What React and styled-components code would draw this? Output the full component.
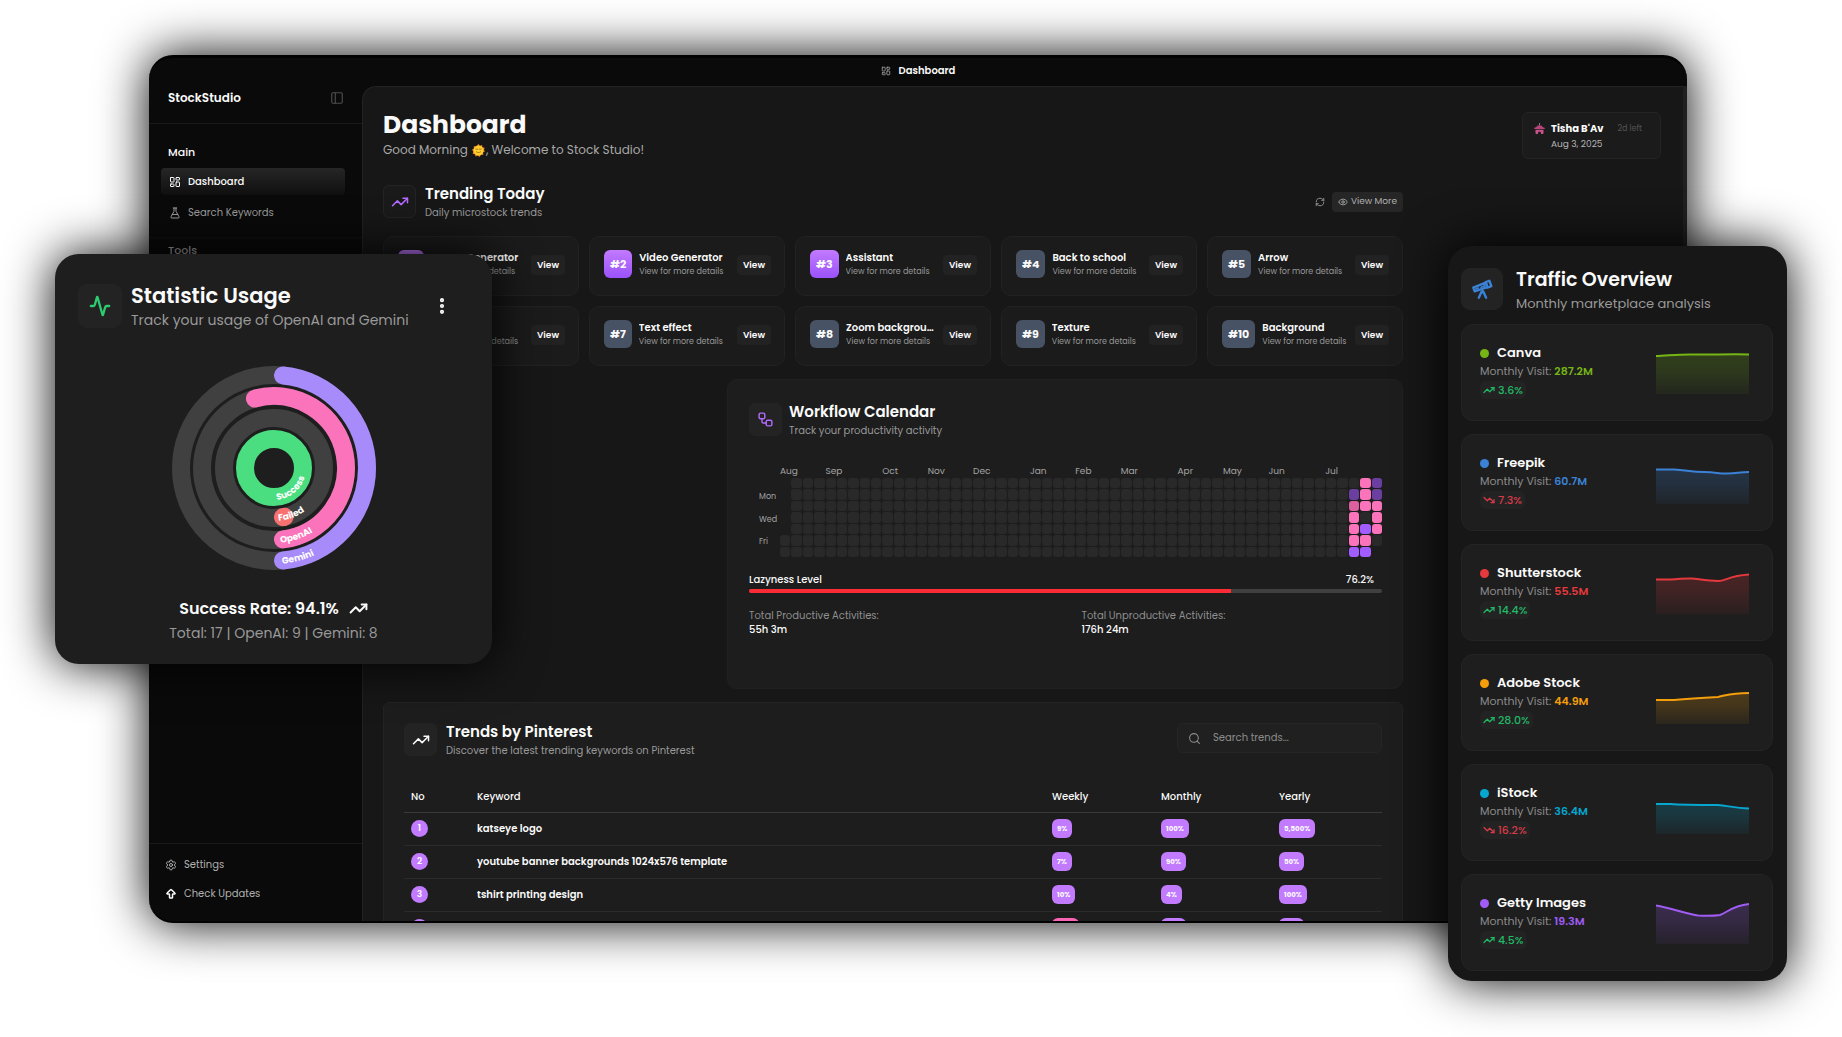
import styled, { createGlobalStyle, css } from "styled-components";
import {
  Activity,
  ArrowBigUp,
  EllipsisVertical,
  Eye,
  FlaskConical,
  LayoutDashboard,
  PanelLeft,
  RefreshCw,
  Search,
  Settings,
  TrendingDown,
  TrendingUp,
  Workflow,
} from "lucide-react";

const GlobalStyle = createGlobalStyle`
  *, *::before, *::after {
    box-sizing: border-box;
    margin: 0;
    padding: 0;
  }

  body {
    background: #fff;
    color: #fafafa;
    font-family: Poppins, Inter, "Noto Sans", sans-serif;
    font-size: 12px;
  }

  button, input {
    font: inherit;
    color: inherit;
    border: none;
    background: none;
  }

  a {
    color: inherit;
    text-decoration: none;
  }

  ul {
    list-style: none;
  }

  svg {
    display: block;
    flex-shrink: 0;
  }
`;

const MONTHS = [
  ["Aug", 0],
  ["Sep", 4],
  ["Oct", 9],
  ["Nov", 13],
  ["Dec", 17],
  ["Jan", 22],
  ["Feb", 26],
  ["Mar", 30],
  ["Apr", 35],
  ["May", 39],
  ["Jun", 43],
  ["Jul", 48],
];

const WEEKDAYS = ["", "Mon", "", "Wed", "", "Fri", ""];

// one letter per day, Sunday first: e = empty, d = dim, r = rose, p = pink, v = violet, - = outside the year
const LAST_WEEKS = ["edrpppv", "pppevpv", "ddpppe-"];

const LEVELS = {
  e: "#292929",
  d: "#6a3fa0",
  r: "#dc5fa0",
  p: "#fb74bb",
  v: "#a15dff",
  "-": "transparent",
};

const WEEKS = [
  "-----ee",
  ...Array.from({ length: 49 }, () => "eeeeeee"),
  ...LAST_WEEKS,
];

const TRENDS = [
  "Image Generator",
  "Video Generator",
  "Assistant",
  "Back to school",
  "Arrow",
  "Adventure",
  "Text effect",
  "Zoom background",
  "Texture",
  "Background",
];

const KEYWORDS = [
  { keyword: "katseye logo", weekly: "9%", monthly: "100%", yearly: "5,500%" },
  {
    keyword: "youtube banner backgrounds 1024x576 template",
    weekly: "7%",
    monthly: "90%",
    yearly: "50%",
  },
  {
    keyword: "tshirt printing design",
    weekly: "10%",
    monthly: "4%",
    yearly: "100%",
  },
  {
    keyword: "back to school",
    weekly: "-10%",
    monthly: "40%",
    yearly: "20%",
    falling: true,
  },
];

const MARKETS = [
  {
    name: "Canva",
    visits: "287.2M",
    change: "3.6%",
    up: true,
    color: "#76b516",
    line: "M0 6C10 6 22 4 38 4.500S70 4 93 4.500",
  },
  {
    name: "Freepik",
    visits: "60.7M",
    change: "7.3%",
    up: false,
    color: "#3b82d6",
    line: "M0 9.500H18C30 10 35 12 48 12S62 14 72 13.500S84 12 93 12",
  },
  {
    name: "Shutterstock",
    visits: "55.5M",
    change: "14.4%",
    up: true,
    color: "#e5393d",
    line: "M0 9.500H15C25 9 30 8 36 8.500S52 11 62 11C70 11 72 6 93 4.500",
  },
  {
    name: "Adobe Stock",
    visits: "44.9M",
    change: "28.0%",
    up: true,
    color: "#f59e0b",
    line: "M0 20H18C30 19 45 18 62 17C72 15 74 13 93 13",
  },
  {
    name: "iStock",
    visits: "36.4M",
    change: "16.2%",
    up: false,
    color: "#06a6cf",
    line: "M0 14H15C25 15 40 15 62 15C72 16 80 18 93 18.500",
  },
  {
    name: "Getty Images",
    visits: "19.3M",
    change: "4.5%",
    up: true,
    color: "#a05cf5",
    line: "M0 5.500C14 8 32 14 42 15.500C50 16 58 16 64 15C72 12 76 6 93 4",
  },
];

/* ---------- shell ---------- */

const Stage = styled.div`
  position: relative;
  min-height: 100vh;
  padding: 55px 155px 114px 149px;
  overflow: hidden;
`;

const Window = styled.div`
  display: flex;
  flex-direction: column;
  height: calc(100vh - 169px);
  min-height: 680px;
  overflow: hidden;
  background: #0a0a0a;
  border-top: 3px solid #020202;
  border-bottom: 2px solid #020202;
  border-radius: 24px;
  box-shadow: 0 0 50px #000;
`;

const TitleBar = styled.div`
  display: flex;
  align-items: center;
  justify-content: center;
  gap: 8px;
  flex: 0 0 28px;
  padding-bottom: 2px;
  font-size: 10px;
  font-weight: 600;

  svg {
    color: #a3a3a3;
  }
`;

const Body = styled.div`
  display: flex;
  flex: 1;
  min-height: 0;
`;

/* ---------- sidebar ---------- */

const Sidebar = styled.aside`
  display: flex;
  flex-direction: column;
  flex: 0 0 213px;
`;

const SidebarHeader = styled.div`
  display: flex;
  align-items: center;
  justify-content: space-between;
  padding: 4px 18px 17px 19px;
  border-bottom: 1px solid #191919;
  font-size: 12px;
  line-height: 16px;
  font-weight: 600;
`;

const IconButton = styled.button`
  display: grid;
  place-items: center;
  color: ${({ $color }) => $color || "#a3a3a3"};
`;

const NavGroup = styled.nav`
  padding: 19px 17px 7px 12px;
  border-bottom: 1px solid #121212;
`;

const NavTitle = styled.h2`
  padding: 0 7px 7px;
  font-size: 11px;
  line-height: 18px;
  font-weight: 500;
`;

const ToolsGroup = styled(NavGroup)`
  padding-top: 3px;
  border-bottom: none;

  ${NavTitle} {
    color: #a3a3a3;
  }
`;

const NavLink = styled.a`
  display: flex;
  align-items: center;
  gap: 7px;
  height: 27px;
  margin-bottom: 4px;
  padding: 0 8px;
  border-radius: 4px;
  font-size: 10px;
  color: #9c9c9c;

  ${({ $active }) =>
    $active &&
    css`
      background: linear-gradient(#262626, #0f0f0f);
      color: #fafafa;
      font-weight: 500;
    `}
`;

const SidebarFooter = styled.nav`
  margin-top: auto;
  padding: 6px 16px 13px 8px;
  border-top: 1px solid #191919;

  ${NavLink} {
    height: 29px;
    margin: 0;
    color: #b0b0b0;
  }
`;

/* ---------- page ---------- */

const Main = styled.main`
  flex: 1;
  min-width: 0;
  overflow: hidden;
  padding: 25px 22px 0 20px;
  background: #171717;
  border: 1px solid #222;
  border-right: 4px solid #202020;
  border-bottom: none;
  border-top-left-radius: 14px;
`;

const PageHeader = styled.header`
  display: flex;
  justify-content: space-between;
  align-items: flex-start;
`;

const PageTitle = styled.h1`
  font-size: 25px;
  line-height: 26px;
  font-weight: 700;
`;

const Greeting = styled.p`
  display: flex;
  align-items: center;
  margin-top: 4px;
  font-size: 12px;
  line-height: 16px;
  color: #a8a8a8;

  svg {
    margin: 0 1px 0 4px;
  }
`;

const Holiday = styled.section`
  display: grid;
  grid-template-columns: 10px auto auto;
  column-gap: 7px;
  row-gap: 1px;
  align-items: center;
  min-width: 139px;
  padding: 8px 18px 6px 11px;
  background: #1b1b1b;
  border: 1px solid #242424;
  border-radius: 6px;
  line-height: 15px;
`;

const HolidayName = styled.h3`
  font-size: 10px;
  font-weight: 700;
`;

const HolidayLeft = styled.span`
  justify-self: end;
  font-size: 8px;
  color: #555;
`;

const HolidayDate = styled.p`
  grid-column: 2 / -1;
  font-size: 9px;
  color: #b5b5b5;
`;

// the second column stays free beside the content
const Columns = styled.div`
  display: grid;
  grid-template-columns: minmax(0, 1fr) 246px;
  column-gap: 12px;
  margin-top: 26px;
`;

const Content = styled.div`
  display: grid;
  grid-template-columns: repeat(3, minmax(0, 1fr));
  gap: 13px 12px;
`;

const Heading = styled.div`
  display: flex;
  align-items: flex-start;
  gap: ${({ $gap }) => $gap || 9}px;
`;

const IconBox = styled.div`
  display: grid;
  place-items: center;
  flex-shrink: 0;
  width: ${({ $size }) => $size || 33}px;
  height: ${({ $size }) => $size || 33}px;
  background: ${({ $plain }) => ($plain ? "#1a1a1a" : "#232323")};
  border: 1px solid #242424;
  border-radius: ${({ $size }) => ($size ? 9 : 6)}px;
  color: ${({ $color }) => $color || "#fafafa"};
`;

const Title = styled.h2`
  font-size: 15px;
  line-height: 18px;
  font-weight: 600;
`;

const Subtitle = styled.p`
  font-size: 10px;
  line-height: 19px;
  color: #999;
`;

const Section = styled.section`
  grid-column: 1 / -1;
`;

const SectionTop = styled.div`
  display: flex;
  align-items: flex-start;
  justify-content: space-between;
`;

const Actions = styled.div`
  display: flex;
  align-items: center;
  gap: 7px;
  height: 33px;
`;

const ViewMore = styled.button`
  display: flex;
  align-items: center;
  gap: 3px;
  height: 20px;
  padding: 0 6px;
  background: #262626;
  border-radius: 4px;
  font-size: 9px;
  color: #b0b0b0;
`;

const TrendGrid = styled.ul`
  display: grid;
  grid-template-columns: repeat(5, minmax(0, 1fr));
  gap: 10px;
  margin-top: 14px;
`;

const TrendCard = styled.li`
  display: flex;
  align-items: flex-start;
  gap: 7px;
  height: 60px;
  padding: 13px 13px 0 14px;
  background: #1b1b1b;
  border: 1px solid #222;
  border-radius: 10px;
`;

const Rank = styled.div`
  flex-shrink: 0;
  padding: 0 6px;
  background: ${({ $top }) =>
    $top ? "linear-gradient(#c27aff, #9a52fb)" : "#475264"};
  border-radius: 6px;
  font-size: 11px;
  line-height: 28px;
  font-weight: 700;
`;

const TrendText = styled.div`
  flex: 1;
  min-width: 0;
  padding-top: 1px;

  h3,
  p {
    overflow: hidden;
    text-overflow: ellipsis;
    white-space: nowrap;
  }

  h3 {
    font-size: 10px;
    line-height: 14px;
    font-weight: 600;
  }

  p {
    font-size: 8px;
    line-height: 13px;
    color: #999;
  }
`;

const ViewButton = styled.button`
  flex-shrink: 0;
  height: 20px;
  margin-top: 5px;
  padding: 0 6px;
  background: #222;
  border-radius: 4px;
  font-size: 9px;
  font-weight: 600;
`;

/* ---------- workflow calendar ---------- */

const WorkflowCard = styled.section`
  grid-column: 2 / -1;
  min-height: 310px;
  padding: 23px 20px 23px 21px;
  background: #1d1d1d;
  border: 1px solid #212121;
  border-radius: 10px;
`;

const CalendarBlock = styled.div`
  display: grid;
  grid-template-columns: 21px minmax(0, 1fr);
  margin: 25px 0 0 10px;
  font-size: 9px;
  line-height: 12px;
  color: #a3a3a3;
`;

const MonthRow = styled.div`
  grid-column: 2;
  display: grid;
  grid-template-columns: repeat(53, minmax(0, 1fr));
  height: 13px;
  white-space: nowrap;
`;

const Month = styled.span`
  grid-column: ${({ $week }) => $week + 1} / span 4;
`;

const DayLabels = styled.div`
  display: grid;
  grid-template-rows: repeat(7, minmax(0, 1fr));
  height: 79px;
  font-size: 8px;
  line-height: 16px;
`;

const Weeks = styled.div`
  display: grid;
  grid-auto-flow: column;
  grid-template-rows: repeat(7, minmax(0, 1fr));
  grid-auto-columns: minmax(0, 1fr);
  gap: 1px;
`;

const Day = styled.span`
  background: ${({ $level }) => LEVELS[$level]};
  border-radius: 3px;
`;

const LevelRow = styled.div`
  display: flex;
  justify-content: space-between;
  margin-top: 16px;
  padding-right: 8px;
  font-size: 10px;
  line-height: 14px;
  font-weight: 500;
`;

const Track = styled.div`
  height: 4px;
  margin-top: 2px;
  background: #404040;
  border-radius: 2px;
`;

const TrackFill = styled.div`
  height: 100%;
  background: #fb2c36;
  border-radius: 2px 0 0 2px;
`;

const Totals = styled.dl`
  display: grid;
  grid-template-columns: 1fr 1fr;
  column-gap: 32px;
  margin-top: 16px;
  font-size: 10px;
  line-height: 14px;

  dt {
    color: #8f8f8f;
  }

  dd {
    font-weight: 500;
  }
`;

/* ---------- pinterest table ---------- */

const PinterestCard = styled.section`
  grid-column: 1 / -1;
  padding: 20px;
  background: #1d1d1d;
  border: 1px solid #232323;
  border-radius: 6px;
`;

const SearchBox = styled.label`
  display: flex;
  align-items: center;
  gap: 12px;
  width: 205px;
  height: 30px;
  padding: 0 10px;
  background: #202020;
  border: 1px solid #252525;
  border-radius: 6px;
  color: #8c8c8c;

  input {
    flex: 1;
    min-width: 0;
    font-size: 10px;
    outline: none;
  }

  input::placeholder {
    color: #8c8c8c;
  }
`;

const Table = styled.table`
  width: 100%;
  margin-top: 23px;
  border-collapse: collapse;
  table-layout: fixed;
  text-align: left;

  th {
    height: 29px;
    padding: 0 7px;
    border-bottom: 1px solid #3a3a3a;
    font-size: 10px;
    font-weight: 500;
  }

  td {
    height: 33px;
    padding: 0 7px;
    border-bottom: 1px solid #2b2b2b;
    font-size: 10px;
    font-weight: 600;
  }
`;

const Number = styled.span`
  display: grid;
  place-items: center;
  width: 17px;
  height: 17px;
  background: #c27aff;
  border-radius: 50%;
  font-size: 9px;
`;

const Pill = styled.span`
  display: inline-block;
  padding: 0 5px;
  background: ${({ $falling }) => ($falling ? "#fb64b6" : "#c27aff")};
  border-radius: 6px;
  font-size: 7px;
  line-height: 19px;
  font-weight: 700;
  vertical-align: middle;
`;

/* ---------- floating cards ---------- */

const FloatingCard = styled.section`
  position: absolute;
  border-radius: 24px;
  box-shadow: 0 0 50px #000;

  ${Title} {
    font-size: ${({ $titleSize }) => $titleSize}px;
    line-height: 24px;
  }

  ${Subtitle} {
    font-size: ${({ $textSize }) => $textSize}px;
    line-height: 24px;
  }
`;

const StatisticCard = styled(FloatingCard)`
  top: 254px;
  left: 55px;
  width: 437px;
  padding: 30px 40px 19px 23px;
  background: #1e1e1e;

  ${IconButton} {
    height: 44px;
  }
`;

const ChartArea = styled.div`
  display: flex;
  justify-content: center;
  margin-top: 33px;
  padding-left: 17px;
`;

const ChartFooter = styled.div`
  margin-top: 25px;
  padding-left: 17px;
  text-align: center;
`;

const SuccessRate = styled.p`
  display: flex;
  justify-content: center;
  align-items: center;
  gap: 10px;
  font-size: 16px;
  line-height: 25px;
  font-weight: 600;
`;

const TrafficCard = styled(FloatingCard)`
  top: 246px;
  right: 55px;
  width: 339px;
  padding: 22px 14px 10px 13px;
  background: #171717;
`;

const MarketList = styled.ul`
  display: grid;
  gap: 13px;
  margin-top: 8px;
`;

const Market = styled.li`
  display: flex;
  justify-content: space-between;
  align-items: flex-start;
  height: 97px;
  padding: 19px 23px 0 18px;
  background: #1e1e1e;
  border: 1px solid #242424;
  border-radius: 12px;
`;

const MarketName = styled.h3`
  display: flex;
  align-items: center;
  gap: 8px;
  font-size: 13px;
  line-height: 18px;
  font-weight: 600;

  &::before {
    content: "";
    width: 9px;
    height: 9px;
    background: ${({ $color }) => $color};
    border-radius: 50%;
  }
`;

const Visits = styled.p`
  font-size: 11px;
  line-height: 18px;
  color: #8c8c8c;

  strong {
    color: ${({ $color }) => $color};
    font-weight: 600;
  }
`;

const Change = styled.span`
  display: inline-flex;
  align-items: center;
  gap: 3px;
  height: 18px;
  margin-top: 1px;
  padding: 0 3px;
  background: #232323;
  border-radius: 6px;
  font-size: 11px;
  font-weight: 500;
  color: ${({ $up }) => ($up ? "#22b866" : "#d63b48")};
`;

const Sparkline = styled.svg`
  margin-top: 6px;
`;

function SunIcon() {
  return (
    <svg width="13" height="13" viewBox="0 0 24 24">
      <path
        fill="#f28c1c"
        d="m12 0 2.600 3.400L18.600 2l.6 4.200 4.200.8-1.500 4L24 13.600l-3.500 2.300.3 4.300-4.200-.2L14 24l-3.200-2.700L6.800 23l-1.400-4-4.200-1 1.200-4L0 10.600l3.500-2.400L3.200 4l4.300.2z"
      />
      <circle cx="12" cy="12" r="9" fill="#ffd02f" />
      <path
        fill="none"
        stroke="#9a6410"
        strokeWidth="1.500"
        strokeLinecap="round"
        d="M7 9.500h3.500M13.500 9.500H17M8 14.500c2.500 2 5.500 2 8 0"
      />
    </svg>
  );
}

function TempleIcon() {
  return (
    <svg width="11" height="11" viewBox="0 0 22 22">
      <path stroke="#a3a3a3" strokeWidth="1.500" d="M11 0v5" />
      <path fill="#b8447c" d="M0 10c4-1 6-3 7-5h8c1 2 3 4 7 5l-1 2H1z" />
      <path
        fill="#c7528a"
        d="M3 13.500h16V20c0 1-1 2-2 2h-3v-2a3 3 0 0 0-6 0v2H5c-1 0-2-1-2-2z"
      />
    </svg>
  );
}

function TelescopeIcon() {
  return (
    <svg
      width="22"
      height="22"
      viewBox="0 0 24 24"
      fill="none"
      stroke="#3b82d6"
      strokeWidth="2.600"
      strokeLinecap="round"
      strokeLinejoin="round"
    >
      <path d="m2.500 10.500 1.500 4 14-4.500-2-5z" />
      <path d="m16 4.500 4-1.500 2.200 6L18 10.500z" />
      <path d="m5 12 3-1M11 10l4-1.400" strokeWidth="1.800" />
      <path d="m11.500 15-3 6.500M13.500 15l3 6.500M12.500 13.500v2" />
    </svg>
  );
}

// Arcs start straight down and run counter-clockwise. The round caps stay inside the sweep.
const RING_WIDTH = 18;
const RINGS = [
  { label: "Gemini", radius: 93, sweep: 180, color: "#a78bfa" },
  { label: "OpenAI", radius: 72, sweep: 202.5, color: "#fb74bb" },
  { label: "Failed", radius: 50, sweep: 22.5, color: "#f87171" },
  { label: "Success", radius: 29, sweep: 360, color: "#4ade80" },
];

function pointAt(radius, degrees) {
  const angle = (degrees * Math.PI) / 180;
  return `${radius * Math.sin(angle)} ${radius * Math.cos(angle)}`;
}

function arcPath(radius, from, to) {
  const large = to - from > 180 ? 1 : 0;
  return `M${pointAt(radius, from)}A${radius} ${radius} 0 ${large} 0 ${pointAt(radius, to)}`;
}

function RadialChart() {
  return (
    <svg width="206" height="206" viewBox="-103 -103 206 206">
      {RINGS.map(({ label, radius, sweep, color }) => {
        const cap = (RING_WIDTH / 2 / radius) * (180 / Math.PI);

        return (
          <g key={label} fill="none" strokeWidth={RING_WIDTH}>
            <circle r={radius} stroke={sweep === 360 ? color : "#404040"} />
            {sweep < 360 && (
              <path
                d={arcPath(radius, cap, sweep - cap)}
                stroke={color}
                strokeLinecap="round"
              />
            )}
            <path
              id={`ring-${label}`}
              d={arcPath(radius + 3, 5, 170)}
              stroke="none"
            />
          </g>
        );
      })}
      {RINGS.map(({ label }) => (
        <text key={label} fill="#fff" fontSize="9" fontWeight="700">
          <textPath href={`#ring-${label}`}>{label}</textPath>
        </text>
      ))}
    </svg>
  );
}

function StatisticUsage() {
  return (
    <StatisticCard $titleSize={21} $textSize={14}>
      <SectionTop>
        <Heading>
          <IconBox $size={44} $color="#2ecc71">
            <Activity size={22} strokeWidth={2.5} />
          </IconBox>
          <div>
            <Title>Statistic Usage</Title>
            <Subtitle>Track your usage of OpenAI and Gemini</Subtitle>
          </div>
        </Heading>
        <IconButton $color="#fafafa" aria-label="More options">
          <EllipsisVertical size={20} strokeWidth={3} />
        </IconButton>
      </SectionTop>
      <ChartArea>
        <RadialChart />
      </ChartArea>
      <ChartFooter>
        <SuccessRate>
          Success Rate: 94.1% <TrendingUp size={19} strokeWidth={2.5} />
        </SuccessRate>
        <Subtitle>Total: 17 | OpenAI: 9 | Gemini: 8</Subtitle>
      </ChartFooter>
    </StatisticCard>
  );
}

function MarketRow({ market }) {
  const { name, visits, change, up, color, line } = market;
  const gradientId = `fill-${name.replace(" ", "-")}`;
  const Trend = up ? TrendingUp : TrendingDown;

  return (
    <Market>
      <div>
        <MarketName $color={color}>{name}</MarketName>
        <Visits $color={color}>
          Monthly Visit: <strong>{visits}</strong>
        </Visits>
        <Change $up={up}>
          <Trend size={12} strokeWidth={2.5} /> {change}
        </Change>
      </div>
      <Sparkline width="93" height="44" viewBox="0 0 93 44">
        <defs>
          <linearGradient id={gradientId} x1="0" y1="0" x2="0" y2="1">
            <stop offset="0" stopColor={color} stopOpacity="0.22" />
            <stop offset="0.4" stopColor={color} stopOpacity="0.18" />
            <stop offset="1" stopColor={color} stopOpacity="0.06" />
          </linearGradient>
        </defs>
        <path d={`${line}V44H0Z`} fill={`url(#${gradientId})`} />
        <path d={line} fill="none" stroke={color} strokeWidth="2" />
      </Sparkline>
    </Market>
  );
}

function TrafficOverview() {
  return (
    <TrafficCard $titleSize={19} $textSize={13}>
      <Heading $gap={13}>
        <IconBox $size={42}>
          <TelescopeIcon />
        </IconBox>
        <div>
          <Title>Traffic Overview</Title>
          <Subtitle>Monthly marketplace analysis</Subtitle>
        </div>
      </Heading>
      <MarketList>
        {MARKETS.map((market) => (
          <MarketRow key={market.name} market={market} />
        ))}
      </MarketList>
    </TrafficCard>
  );
}

function TrendingToday() {
  return (
    <Section>
      <SectionTop>
        <Heading>
          <IconBox $plain $color="#b26bff">
            <TrendingUp size={18} />
          </IconBox>
          <div>
            <Title>Trending Today</Title>
            <Subtitle>Daily microstock trends</Subtitle>
          </div>
        </Heading>
        <Actions>
          <IconButton aria-label="Refresh">
            <RefreshCw size={10} />
          </IconButton>
          <ViewMore>
            <Eye size={10} /> View More
          </ViewMore>
        </Actions>
      </SectionTop>
      <TrendGrid>
        {TRENDS.map((trend, i) => (
          <TrendCard key={trend}>
            <Rank $top={i < 3}>#{i + 1}</Rank>
            <TrendText>
              <h3>{trend}</h3>
              <p>View for more details</p>
            </TrendText>
            <ViewButton>View</ViewButton>
          </TrendCard>
        ))}
      </TrendGrid>
    </Section>
  );
}

function WorkflowCalendar() {
  const lazyness = 76.2;

  return (
    <WorkflowCard>
      <Heading $gap={7}>
        <IconBox $color="#b26bff">
          <Workflow size={17} />
        </IconBox>
        <div>
          <Title>Workflow Calendar</Title>
          <Subtitle>Track your productivity activity</Subtitle>
        </div>
      </Heading>
      <CalendarBlock>
        <MonthRow>
          {MONTHS.map(([month, week]) => (
            <Month key={month} $week={week}>
              {month}
            </Month>
          ))}
        </MonthRow>
        <DayLabels>
          {WEEKDAYS.map((day, i) => (
            <span key={i}>{day}</span>
          ))}
        </DayLabels>
        <Weeks>
          {WEEKS.map((week, i) =>
            [...week].map((level, j) => <Day key={`${i}-${j}`} $level={level} />)
          )}
        </Weeks>
      </CalendarBlock>
      <LevelRow>
        <span>Lazyness Level</span>
        <span>{lazyness}%</span>
      </LevelRow>
      <Track>
        <TrackFill style={{ width: `${lazyness}%` }} />
      </Track>
      <Totals>
        <div>
          <dt>Total Productive Activities:</dt>
          <dd>55h 3m</dd>
        </div>
        <div>
          <dt>Total Unproductive Activities:</dt>
          <dd>176h 24m</dd>
        </div>
      </Totals>
    </WorkflowCard>
  );
}

function PinterestTrends() {
  return (
    <PinterestCard>
      <SectionTop>
        <Heading>
          <IconBox>
            <TrendingUp size={18} />
          </IconBox>
          <div>
            <Title>Trends by Pinterest</Title>
            <Subtitle>Discover the latest trending keywords on Pinterest</Subtitle>
          </div>
        </Heading>
        <SearchBox>
          <Search size={13} />
          <input
            type="search"
            placeholder="Search trends..."
            aria-label="Search trends"
          />
        </SearchBox>
      </SectionTop>
      <Table>
        <colgroup>
          <col width="66" />
          <col />
          <col width="109" />
          <col width="118" />
          <col width="110" />
        </colgroup>
        <thead>
          <tr>
            <th>No</th>
            <th>Keyword</th>
            <th>Weekly</th>
            <th>Monthly</th>
            <th>Yearly</th>
          </tr>
        </thead>
        <tbody>
          {KEYWORDS.map((row, i) => (
            <tr key={row.keyword}>
              <td>
                <Number>{i + 1}</Number>
              </td>
              <td>{row.keyword}</td>
              <td>
                <Pill $falling={row.falling}>{row.weekly}</Pill>
              </td>
              <td>
                <Pill>{row.monthly}</Pill>
              </td>
              <td>
                <Pill>{row.yearly}</Pill>
              </td>
            </tr>
          ))}
        </tbody>
      </Table>
    </PinterestCard>
  );
}

function AppSidebar() {
  return (
    <Sidebar>
      <SidebarHeader>
        StockStudio
        <IconButton $color="#4d4d4d" aria-label="Toggle sidebar">
          <PanelLeft size={14} />
        </IconButton>
      </SidebarHeader>
      <NavGroup>
        <NavTitle>Main</NavTitle>
        <NavLink href="#dashboard" $active>
          <LayoutDashboard size={12} /> Dashboard
        </NavLink>
        <NavLink href="#keywords">
          <FlaskConical size={12} /> Search Keywords
        </NavLink>
      </NavGroup>
      <ToolsGroup>
        <NavTitle>Tools</NavTitle>
      </ToolsGroup>
      <SidebarFooter>
        <NavLink href="#settings">
          <Settings size={12} /> Settings
        </NavLink>
        <NavLink href="#updates">
          <ArrowBigUp size={12} strokeWidth={3} color="#fafafa" /> Check Updates
        </NavLink>
      </SidebarFooter>
    </Sidebar>
  );
}

function App() {
  return (
    <>
      <GlobalStyle />
      <Stage>
        <Window>
          <TitleBar>
            <LayoutDashboard size={10} /> Dashboard
          </TitleBar>
          <Body>
            <AppSidebar />
            <Main>
              <PageHeader>
                <div>
                  <PageTitle>Dashboard</PageTitle>
                  <Greeting>
                    Good Morning <SunIcon />, Welcome to Stock Studio!
                  </Greeting>
                </div>
                <Holiday>
                  <TempleIcon />
                  <HolidayName>Tisha B'Av</HolidayName>
                  <HolidayLeft>2d left</HolidayLeft>
                  <HolidayDate>Aug 3, 2025</HolidayDate>
                </Holiday>
              </PageHeader>
              <Columns>
                <Content>
                  <TrendingToday />
                  <WorkflowCalendar />
                  <PinterestTrends />
                </Content>
              </Columns>
            </Main>
          </Body>
        </Window>
        <StatisticUsage />
        <TrafficOverview />
      </Stage>
    </>
  );
}

export default App;
